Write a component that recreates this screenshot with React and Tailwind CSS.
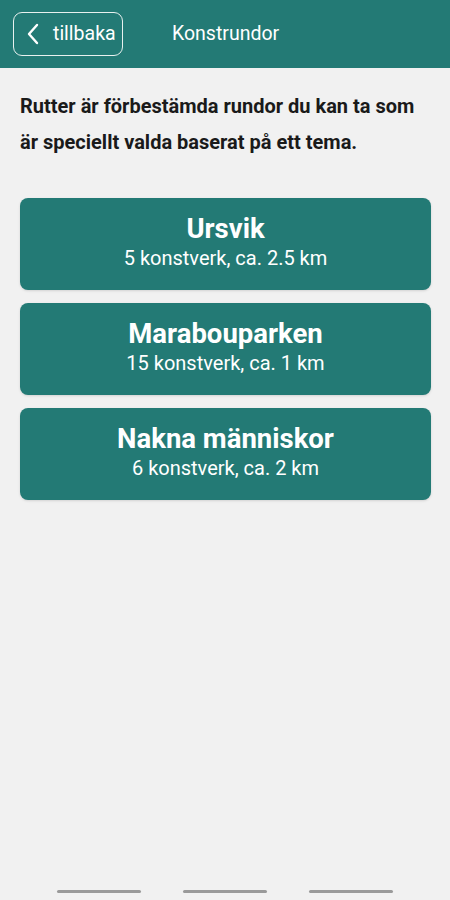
const routes = [
  { name: "Ursvik", info: "5 konstverk, ca. 2.5 km" },
  { name: "Marabouparken", info: "15 konstverk, ca. 1 km" },
  { name: "Nakna människor", info: "6 konstverk, ca. 2 km" },
];

export default function App() {
  return (
    <div className="w-[450px] h-[900px] bg-[#f1f1f1] flex flex-col font-['Roboto',sans-serif]">
      <header className="h-[68px] bg-[#237a75] flex items-center px-[13px] shrink-0">
        <button className="h-[44px] w-[110px] border-[1.5px] border-[#e8f1ef] rounded-[9px] flex items-center pl-[13px] gap-[14px] text-white">
          <svg width="12" height="22" viewBox="0 0 12 22" fill="none">
            <path d="M10 2 L2 11 L10 20" stroke="#fff" strokeWidth="2.4" strokeLinecap="round" strokeLinejoin="round" />
          </svg>
          <span className="text-[19.5px] leading-none">tillbaka</span>
        </button>
        <h1 className="ml-[49px] text-white text-[19.5px]">Konstrundor</h1>
      </header>

      <main className="flex-1 px-[20px]">
        <p className="mt-[20px] text-[20px] font-bold leading-[36px] text-[#1a1a1a]">
          Rutter är förbestämda rundor du kan ta som är speciellt valda baserat på ett tema.
        </p>

        <div className="mt-[38px] flex flex-col gap-[13px] mr-[-1px]">
          {routes.map((r) => (
            <div key={r.name} className="h-[92px] pb-[5px] bg-[#237a75] rounded-[8px] shadow-sm flex flex-col items-center justify-center text-white">
              <h3 className="text-[27.5px] font-bold leading-[32px]">{r.name}</h3>
              <p className="text-[20px] leading-[26px]">{r.info}</p>
            </div>
          ))}
        </div>
      </main>

      <div className="h-[10px] flex justify-center items-start gap-[42px] shrink-0">
        <div className="w-[84px] h-[3px] rounded-full bg-[#9a9a9a]" />
        <div className="w-[84px] h-[3px] rounded-full bg-[#9a9a9a]" />
        <div className="w-[84px] h-[3px] rounded-full bg-[#9a9a9a]" />
      </div>
    </div>
  );
}
